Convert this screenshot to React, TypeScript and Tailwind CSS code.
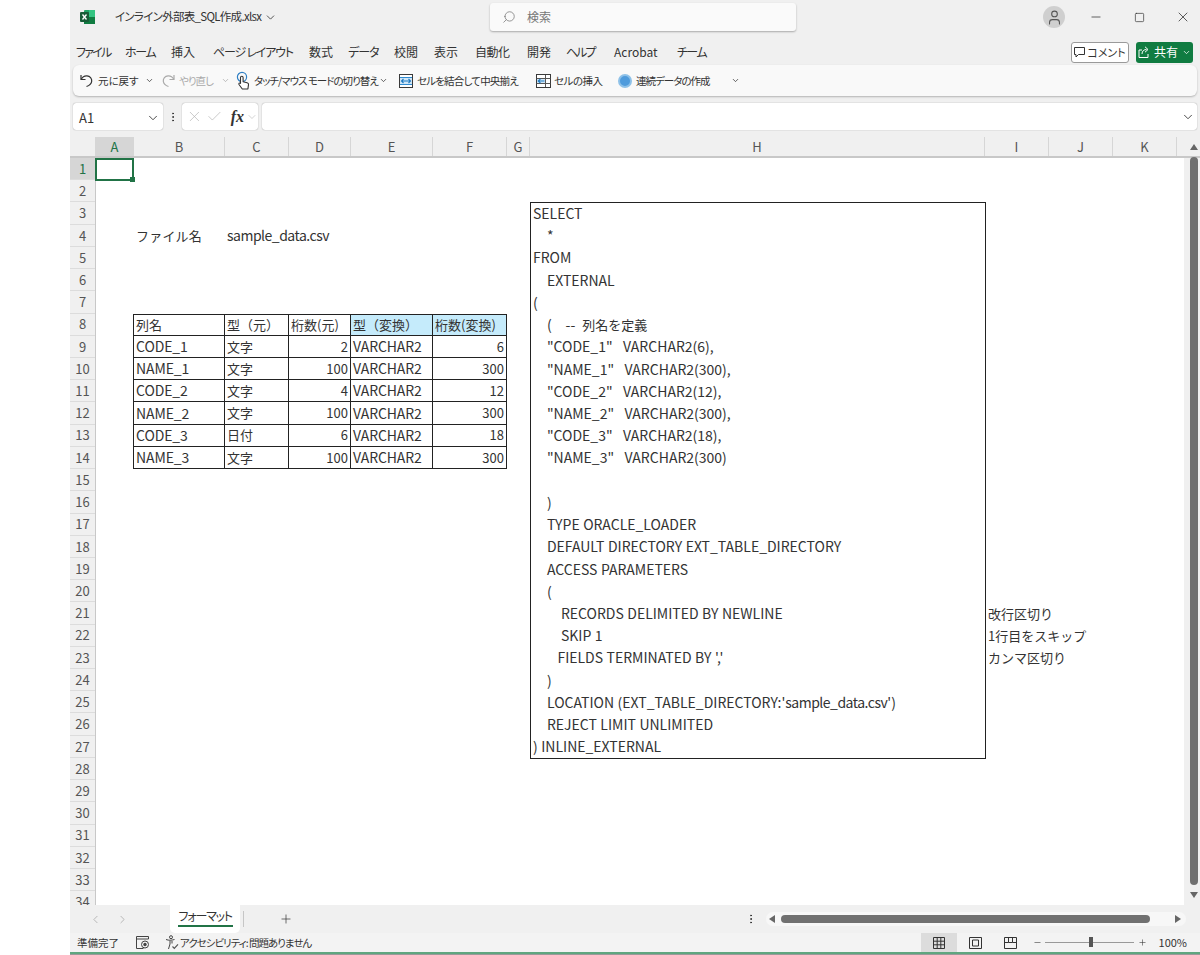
import { Check, ChevronDown, ChevronLeft, ChevronRight, Minus, MoreVertical, Plus, Search, Square, User, X } from "lucide-react"

const font = "font-['Noto_Sans_CJK_JP','Noto_Sans',sans-serif]"
const palt = "[font-feature-settings:'palt'] whitespace-nowrap"

const tabs = [
  ["ファイル", "w-[49px] tracking-[-1.75px]"],
  ["ホーム", "w-[46px] tracking-[-1.3px]"],
  ["挿入", "w-[42px]"],
  ["ページ レイアウト", "w-[96px] tracking-[-1.2px]"],
  ["数式", "w-[39px]"],
  ["データ", "w-[46px] tracking-[-1px]"],
  ["校閲", "w-[40px]"],
  ["表示", "w-[41px]"],
  ["自動化", "w-[52px] tracking-[-0.5px]"],
  ["開発", "w-[39px]"],
  ["ヘルプ", "w-[48px] tracking-[-2px]"],
  ["Acrobat", "w-[63px]"],
  ["チーム", "w-[50px] tracking-[-1.5px]"],
]

const columns = [
  ["A", "w-[38px]"],
  ["B", "w-[91px]"],
  ["C", "w-[64px]"],
  ["D", "w-[62px]"],
  ["E", "w-[82px]"],
  ["F", "w-[74px]"],
  ["G", "w-[23px]"],
  ["H", "w-[455px]"],
  ["I", "w-[64px]"],
  ["J", "w-[64px]"],
  ["K", "w-[64px]"],
]

const rows = Array.from({ length: 34 }, (_, i) => i + 1)

const tableRows = [
  ["列名", "型（元）", "桁数(元)", "型（変換）", "桁数(変換)"],
  ["CODE_1", "文字", "2", "VARCHAR2", "6"],
  ["NAME_1", "文字", "100", "VARCHAR2", "300"],
  ["CODE_2", "文字", "4", "VARCHAR2", "12"],
  ["NAME_2", "文字", "100", "VARCHAR2", "300"],
  ["CODE_3", "日付", "6", "VARCHAR2", "18"],
  ["NAME_3", "文字", "100", "VARCHAR2", "300"],
]

const sql = [
  "SELECT",
  "    *",
  "FROM",
  "    EXTERNAL",
  "(",
  "    (    --  列名を定義",
  '    "CODE_1"   VARCHAR2(6),',
  '    "NAME_1"   VARCHAR2(300),',
  '    "CODE_2"   VARCHAR2(12),',
  '    "NAME_2"   VARCHAR2(300),',
  '    "CODE_3"   VARCHAR2(18),',
  '    "NAME_3"   VARCHAR2(300)',
  "",
  "    )",
  "    TYPE ORACLE_LOADER",
  "    DEFAULT DIRECTORY EXT_TABLE_DIRECTORY",
  "    ACCESS PARAMETERS",
  "    (",
  "        RECORDS DELIMITED BY NEWLINE",
  "        SKIP 1",
  "       FIELDS TERMINATED BY ','",
  "    )",
  "    LOCATION (EXT_TABLE_DIRECTORY:'sample_data.csv')",
  "    REJECT LIMIT UNLIMITED",
  ") INLINE_EXTERNAL",
]

function ExcelLogo() {
  return (
    <svg width="15" height="14" viewBox="0 0 15 14">
      <rect x="4" y="0" width="11" height="14" rx="1" fill="#21a366" />
      <rect x="4" y="7" width="11" height="7" fill="#107c41" />
      <rect x="9" y="0" width="6" height="7" fill="#33c481" />
      <rect x="0" y="2" width="9" height="10" rx="1" fill="#185c37" />
      <path d="M2.5 4.5 6.5 9.5M6.5 4.5 2.5 9.5" stroke="#fff" strokeWidth="1.3" />
    </svg>
  )
}

function UndoIcon({ color }: { color: string }) {
  return (
    <svg width="15" height="15" viewBox="0 0 15 15" fill="none" stroke={color} strokeWidth="1.2">
      <path d="M2 2v4.5h4.5" />
      <path d="M2.2 6.3C3.5 3.8 5.5 2.6 8 2.8c3 .3 5 2.6 4.7 5.4-.3 2.4-2.2 4.3-5.2 5.3" />
    </svg>
  )
}

function RedoIcon() {
  return (
    <span className="flex -scale-x-100">
      <UndoIcon color="#aaa" />
    </span>
  )
}

function TouchIcon() {
  return (
    <svg width="16" height="20" viewBox="0 0 16 20" fill="none">
      <circle cx="6" cy="6" r="4.6" stroke="#2f7fc4" strokeWidth="1.2" />
      <path d="M4.5 6.5a1.3 1.3 0 0 1 2.6 0v4.2l4 1c1 .3 1.6 1 1.4 2l-.6 4.3H6.3L3 13.5c-.6-1 .5-2 1.5-1.2Z" fill="#fff" stroke="#333" strokeWidth="1.1" strokeLinejoin="round" />
    </svg>
  )
}

function MergeIcon() {
  return (
    <svg width="14" height="14" viewBox="0 0 14 14" fill="none">
      <rect x=".5" y=".5" width="13" height="13" fill="#fff" stroke="#3a3a3a" />
      <rect x="1" y="4" width="12" height="6" fill="#cfe6f7" />
      <path d="M2.5 7h9M4.5 5 2.5 7l2 2M9.5 5l2 2-2 2" stroke="#1f7ac2" strokeWidth="1.1" />
      <path d="M1 3.5h12M1 10.5h12" stroke="#2f8ad0" />
    </svg>
  )
}

function InsertIcon() {
  return (
    <svg width="15" height="14" viewBox="0 0 15 14" fill="none">
      <rect x=".5" y=".5" width="14" height="13" fill="#fff" stroke="#3a3a3a" />
      <path d="M9.5 1v12M.5 4.5h14M.5 9.5h14" stroke="#555" />
      <rect x="1" y="5" width="8" height="4" fill="#cfe6f7" />
      <path d="M8.5 7H2M4.5 4.8 2.2 7l2.3 2.2" stroke="#1f7ac2" strokeWidth="1.1" />
    </svg>
  )
}

function ShareIcon() {
  return (
    <svg width="12" height="12" viewBox="0 0 12 12" fill="none" stroke="#fff" strokeWidth="1">
      <path d="M4 4H1v7.500h9V8" />
      <path d="M4 8c0-3 2-4.500 4.500-4.500M7 .8l3 2.700-3 2.700" />
    </svg>
  )
}

function MacroIcon() {
  return (
    <svg width="14" height="13" viewBox="0 0 14 13" fill="none" stroke="#444">
      <path d="M.5 3V.5h12V3M.5 3h12M.5 3v9.5h7" />
      <circle cx="9" cy="8.5" r="3.5" fill="#f3f3f3" />
      <circle cx="9" cy="8.5" r="1.7" fill="#444" stroke="none" />
    </svg>
  )
}

function AccessIcon() {
  return (
    <svg width="14" height="15" viewBox="0 0 14 15" fill="none" stroke="#444">
      <circle cx="6" cy="2.2" r="1.5" />
      <path d="M1 4.5c3 1 5 1 8.500 0M5 6v3l-1.500 5M7 6v2.500" />
      <path d="m7.500 11.500 1.800 1.800 3.700-4" stroke="#555" strokeWidth="1.200" />
    </svg>
  )
}

function clsxLite(...parts: (string | false)[]) {
  return parts.filter(Boolean).join(" ")
}

function TableCell({ text, r, c }: { text: string; r: number; c: number }) {
  return (
    <div
      className={clsxLite(
        "flex items-center whitespace-nowrap overflow-hidden border-r border-b border-[#222] px-[2px] text-[#333]",
        /[A-Z]/.test(text) ? "text-[14px] tracking-[-0.1px]" : "text-[13px]",
        r === 0 && "border-t",
        c === 0 && "ml-[-1px] border-l",
        r === 0 && c >= 3 && "bg-[#c5ebfb]",
        r > 0 && (c === 2 || c === 4) && "justify-end"
      )}
    >
      {text}
    </div>
  )
}

function Empty() {
  return <div />
}

function Note({ text }: { text: string }) {
  return <div className="flex items-center whitespace-nowrap pl-[3px] text-[13px] text-[#333]">{text}</div>
}

function SqlLine({ line }: { line: string }) {
  return (
    <div className="flex h-[22.23px] items-center whitespace-pre text-[14px] text-[#333] [word-spacing:0.35px]">
      {line.split(/([^\x00-\x7f]+|sample_data\.csv)/).map((part, i) =>
        i % 2 === 0 ? (
          <span key={i}>{part}</span>
        ) : (
          <span key={i} className={part.startsWith("sample") ? "tracking-[-0.5px]" : "text-[13px]"}>
            {part}
          </span>
        )
      )}
    </div>
  )
}

function Sheet() {
  const cells = []
  for (const r of rows) {
    const isTable = r >= 8 && r <= 14
    for (let c = 0; c < 11; c++) {
      if (c === 7 && r >= 3 && r <= 27) continue
      const key = r + "-" + c
      if (isTable && c >= 1 && c <= 5) {
        cells.push(<TableCell key={key} text={tableRows[r - 8][c - 1]} r={r - 8} c={c - 1} />)
      } else if (r === 4 && c === 1) {
        cells.push(<div key={key} className="flex items-center whitespace-nowrap pl-[2px] text-[13px] tracking-[0.2px] text-[#333]">ファイル名</div>)
      } else if (r === 4 && c === 2) {
        cells.push(<div key={key} className="flex items-center whitespace-nowrap pl-[2px] text-[14px] tracking-[-0.5px] text-[#333]">sample_data.csv</div>)
      } else if (r === 21 && c === 8) {
        cells.push(<Note key={key} text="改行区切り" />)
      } else if (r === 22 && c === 8) {
        cells.push(<Note key={key} text="1行目をスキップ" />)
      } else if (r === 23 && c === 8) {
        cells.push(<Note key={key} text="カンマ区切り" />)
      } else {
        cells.push(<Empty key={key} />)
      }
    }
  }

  return (
    <div className="grid flex-1 grid-cols-[38px_91px_64px_62px_82px_74px_23px_455px_64px_64px_64px] auto-rows-[22.23px] overflow-hidden bg-white">
      <div className="col-start-8 row-start-3 row-span-25 mb-[-1px] mr-[-1px] border border-[#222] pl-[2px]">
        <div className="mt-[-1px]">
          {sql.map((line, i) => (
            <SqlLine key={i} line={line} />
          ))}
        </div>
      </div>
      {cells}
    </div>
  )
}

export default function App() {
  return (
    <div className={"flex h-[955px] w-[1200px] overflow-hidden bg-white " + font}>
      <div className="w-[70px] shrink-0" />
      <div className="flex w-[1130px] flex-col bg-[#f0f0f0] text-[#333]">
        {/* title bar */}
        <div className="flex h-[39px] shrink-0 items-center pb-[5px]">
          <div className="ml-[10px] flex w-[35px] items-center"><ExcelLogo /></div>
          <div className={"flex w-[375px] items-center gap-[3px] text-[11.5px] tracking-[-0.7px] " + palt}>
            インライン外部表_SQL作成.xlsx
            <ChevronDown size={13} strokeWidth={1.5} />
          </div>
          <div className="flex h-[28px] w-[306px] items-center gap-[11px] rounded-[3px] bg-[#fafafa] pl-[12px] text-[12px] text-[#777] shadow-[0_1px_2px_rgba(0,0,0,0.3)]">
            <Search size={14} strokeWidth={1.3} className="-scale-x-100" />
            検索
          </div>
          <div className="ml-[247px] flex h-[22px] w-[22px] items-center justify-center rounded-full bg-[#cfcfcf]">
            <User size={17} strokeWidth={1.5} color="#555" />
          </div>
          <Minus size={14} strokeWidth={1.3} className="ml-[24px]" />
          <Square size={11} strokeWidth={1.5} className="ml-[31px]" />
          <X size={16} strokeWidth={1.2} className="ml-[30px]" />
        </div>

        {/* ribbon tabs */}
        <div className="flex h-[26px] shrink-0 items-center pl-[6px]">
          {tabs.map(([label, w]) => (
            <div key={label} className={"text-[12px] " + palt + " " + w}>
              {label}
            </div>
          ))}
          <div className={"ml-[344px] flex h-[21px] w-[58px] items-center justify-center gap-[2px] rounded-[3px] border border-[#9a9a9a] bg-white text-[11px] " + palt}>
            <svg width="11" height="11" viewBox="0 0 11 11" fill="none" stroke="#333"><path d="M.5.5h10v7H4.500L2 10V7.500H.500Z" /></svg>
            コメント
          </div>
          <div className={"ml-[7px] flex h-[21px] w-[57px] items-center justify-center gap-[4px] rounded-[3px] bg-[#107c41] text-[12px] text-white " + palt}>
            <ShareIcon />
            共有
            <ChevronDown size={9} strokeWidth={2} />
          </div>
        </div>

        {/* quick toolbar */}
        <div className={"ml-[3px] flex h-[31px] w-[1124px] shrink-0 items-center rounded-[6px] bg-[#f9f9f9] pl-[6px] text-[10.5px] shadow-[0_1px_2px_rgba(0,0,0,0.25)] " + palt}>
          <UndoIcon color="#333" />
          <span className="ml-[4px] w-[41px]">元に戻す</span>
          <ChevronDown size={9} strokeWidth={2} className="ml-[6px]" />
          <span className="ml-[7px] flex items-center"><RedoIcon /></span>
          <span className="ml-[3px] w-[34px] tracking-[-1px] text-[#aaa]">やり直し</span>
          <ChevronDown size={9} strokeWidth={2} color="#aaa" className="ml-[8px]" />
          <span className="ml-[6px] flex items-center"><TouchIcon /></span>
          <span className="ml-[2px] w-[123px] tracking-[-1px]">タッチ/マウス モードの切り替え</span>
          <ChevronDown size={9} strokeWidth={2} className="ml-[2px]" />
          <span className="ml-[11px] flex items-center"><MergeIcon /></span>
          <span className="ml-[4px] w-[104px] tracking-[-0.8px]">セルを結合して中央揃え</span>
          <span className="ml-[15px] flex items-center"><InsertIcon /></span>
          <span className="ml-[3px] w-[48px] tracking-[-0.5px]">セルの挿入</span>
          <span className="ml-[16px] h-[14px] w-[14px] rounded-full border-2 border-[#8ec1e8] bg-[#4f9bdc]" />
          <span className="ml-[4px] w-[76px] tracking-[-1px]">連続データの作成</span>
          <ChevronDown size={9} strokeWidth={2} className="ml-[19px]" />
        </div>

        {/* formula bar */}
        <div className="mt-[7px] flex h-[27px] shrink-0 items-stretch pl-[3px]">
          <div className="flex w-[90px] items-center justify-between rounded-[3px] bg-white pl-[6px] pr-[3px] pt-[2px] text-[13px] shadow-[0_0_1px_rgba(0,0,0,0.5)]">
            A1
            <ChevronDown size={14} strokeWidth={1.5} />
          </div>
          <div className="flex w-[19px] items-center justify-center"><MoreVertical size={12} strokeWidth={2} /></div>
          <div className="flex w-[76px] items-center rounded-[3px] bg-white pl-[4px] text-[#b5b5b5] shadow-[0_0_1px_rgba(0,0,0,0.5)]">
            <X size={17} strokeWidth={1} />
            <Check size={17} strokeWidth={1} className="ml-[3px]" />
            <span className="ml-[8px] font-['Liberation_Serif',serif] text-[16px] font-bold italic text-[#333]">fx</span>
            <ChevronDown size={12} strokeWidth={1.2} className="ml-[2px]" />
          </div>
          <div className="ml-[4px] flex w-[935px] items-center justify-end rounded-[3px] bg-white pr-[2px] shadow-[0_0_1px_rgba(0,0,0,0.5)]">
            <ChevronDown size={14} strokeWidth={1.5} />
          </div>
        </div>

        {/* column headers */}
        <div className="mt-[7px] flex h-[21px] shrink-0 border-b-2 border-[#c8c8c8] text-[13px] text-[#555]">
          <div className="w-[26px] border-r border-[#d6d6d6]" />
          {columns.map(([name, w]) => (
            <div
              key={name}
              className={
                "flex items-center justify-center border-r border-[#d6d6d6] " +
                w +
                (name === "A" ? " bg-[#d6d6d6] text-[#217346]" : "")
              }
            >
              {name}
            </div>
          ))}
        </div>

        {/* sheet */}
        <div className="relative flex h-[747px] min-h-0 shrink-0">
          <div className="w-[26px] shrink-0 overflow-hidden border-r border-[#c8c8c8] text-[13px] text-[#555]">
            {rows.map((r) => (
              <div
                key={r}
                className={
                  "flex h-[22.23px] items-center justify-center border-b border-[#dcdcdc] " +
                  (r === 1 ? "bg-[#d6d6d6] text-[#217346]" : "")
                }
              >
                {r}
              </div>
            ))}
          </div>
          <Sheet />
          <div className="flex w-[16px] shrink-0 flex-col items-center pl-[4px]">
            <div className="mt-[-14px] h-0 w-0 border-x-[4px] border-b-[6px] border-x-transparent border-b-[#666]" />
            <div className="mt-[7px] h-[728px] w-[8px] rounded-full bg-[#707070]" />
            <div className="mt-[7px] h-0 w-0 border-x-[4px] border-t-[6px] border-x-transparent border-t-[#666]" />
          </div>
          {/* selected cell */}
          <div className="absolute left-[25px] top-0 h-[23px] w-[39px] border-2 border-[#217346]">
            <div className="absolute right-[-3px] bottom-[-3px] h-[5px] w-[5px] bg-[#217346]" />
          </div>
        </div>

        {/* sheet tabs */}
        <div className="flex h-[28px] shrink-0 items-center">
          <ChevronLeft size={13} strokeWidth={1.2} color="#999" className="ml-[19px]" />
          <ChevronRight size={13} strokeWidth={1.2} color="#999" className="ml-[14px]" />
          <div className="ml-[41px] flex h-[28px] w-[70px] flex-col items-center rounded-b-[5px] bg-white pt-[2px] text-[12px]">
            <span className={"w-[55px] border-b-2 border-[#217346] pl-[1px] leading-[18px] tracking-[-1.2px] " + palt}>フォーマット</span>
          </div>
          <div className="ml-[3px] h-[16px] w-px bg-[#c6c6c6]" />
          <Plus size={14} strokeWidth={1.2} className="ml-[35px]" />
          <MoreVertical size={12} strokeWidth={2} className="ml-[452px]" />
          <div className="ml-[9px] flex h-[14px] w-[420px] items-center rounded-full bg-[#f7f7f7]">
            <div className="ml-[3px] h-0 w-0 border-y-[4px] border-r-[6px] border-y-transparent border-r-[#666]" />
            <div className="ml-[6px] h-[8px] w-[369px] rounded-full bg-[#707070]" />
            <div className="ml-[25px] h-0 w-0 border-y-[4px] border-l-[6px] border-y-transparent border-l-[#666]" />
          </div>
        </div>

        {/* status bar */}
        <div className={"flex h-[19px] shrink-0 items-center bg-[#f3f3f3] text-[10.5px] " + palt}>
          <span className="ml-[7px] w-[43px]">準備完了</span>
          <span className="ml-[16px] flex items-center"><MacroIcon /></span>
          <span className="ml-[15px] flex items-center"><AccessIcon /></span>
          <span className="ml-[1px] tracking-[-1px]">アクセシビリティ: 問題ありません</span>
          <div className="ml-auto flex h-[19px] w-[36px] items-center justify-center bg-[#dcdcdc]">
            <svg width="12" height="12" viewBox="0 0 12 12" fill="none" stroke="#333"><path d="M.5.5h11v11H.5zM4.200.5v11M7.800.5v11M.5 4.200h11M.5 7.800h11" /></svg>
          </div>
          <div className="ml-[12px] flex items-center">
            <svg width="13" height="12" viewBox="0 0 13 12" fill="none" stroke="#333"><path d="M.5.5h12v11H.5zM3.500 3h6v6h-6z" /></svg>
          </div>
          <div className="ml-[22px] flex items-center">
            <svg width="13" height="12" viewBox="0 0 13 12" fill="none" stroke="#333"><path d="M.5.5h12v11H.5zM4.500.5v5h4v-5M.5 5.500h4M8.500 5.500h4" /></svg>
          </div>
          <Minus size={9} strokeWidth={1.5} className="ml-[16px]" />
          <div className="relative ml-[3px] h-px w-[89px] bg-[#999]">
            <div className="absolute left-[44px] top-[-5px] h-[10px] w-[4px] bg-[#555]" />
          </div>
          <Plus size={9} strokeWidth={1.5} className="ml-[4px]" />
          <span className="ml-[10px] mr-[13px] w-[30px] text-right text-[11px]">100%</span>
        </div>
        <div className="h-[2px] shrink-0 bg-[#5fa67f]" />
        <div className="h-px shrink-0 bg-[#9a9a9a]" />
      </div>
    </div>
  )
}
